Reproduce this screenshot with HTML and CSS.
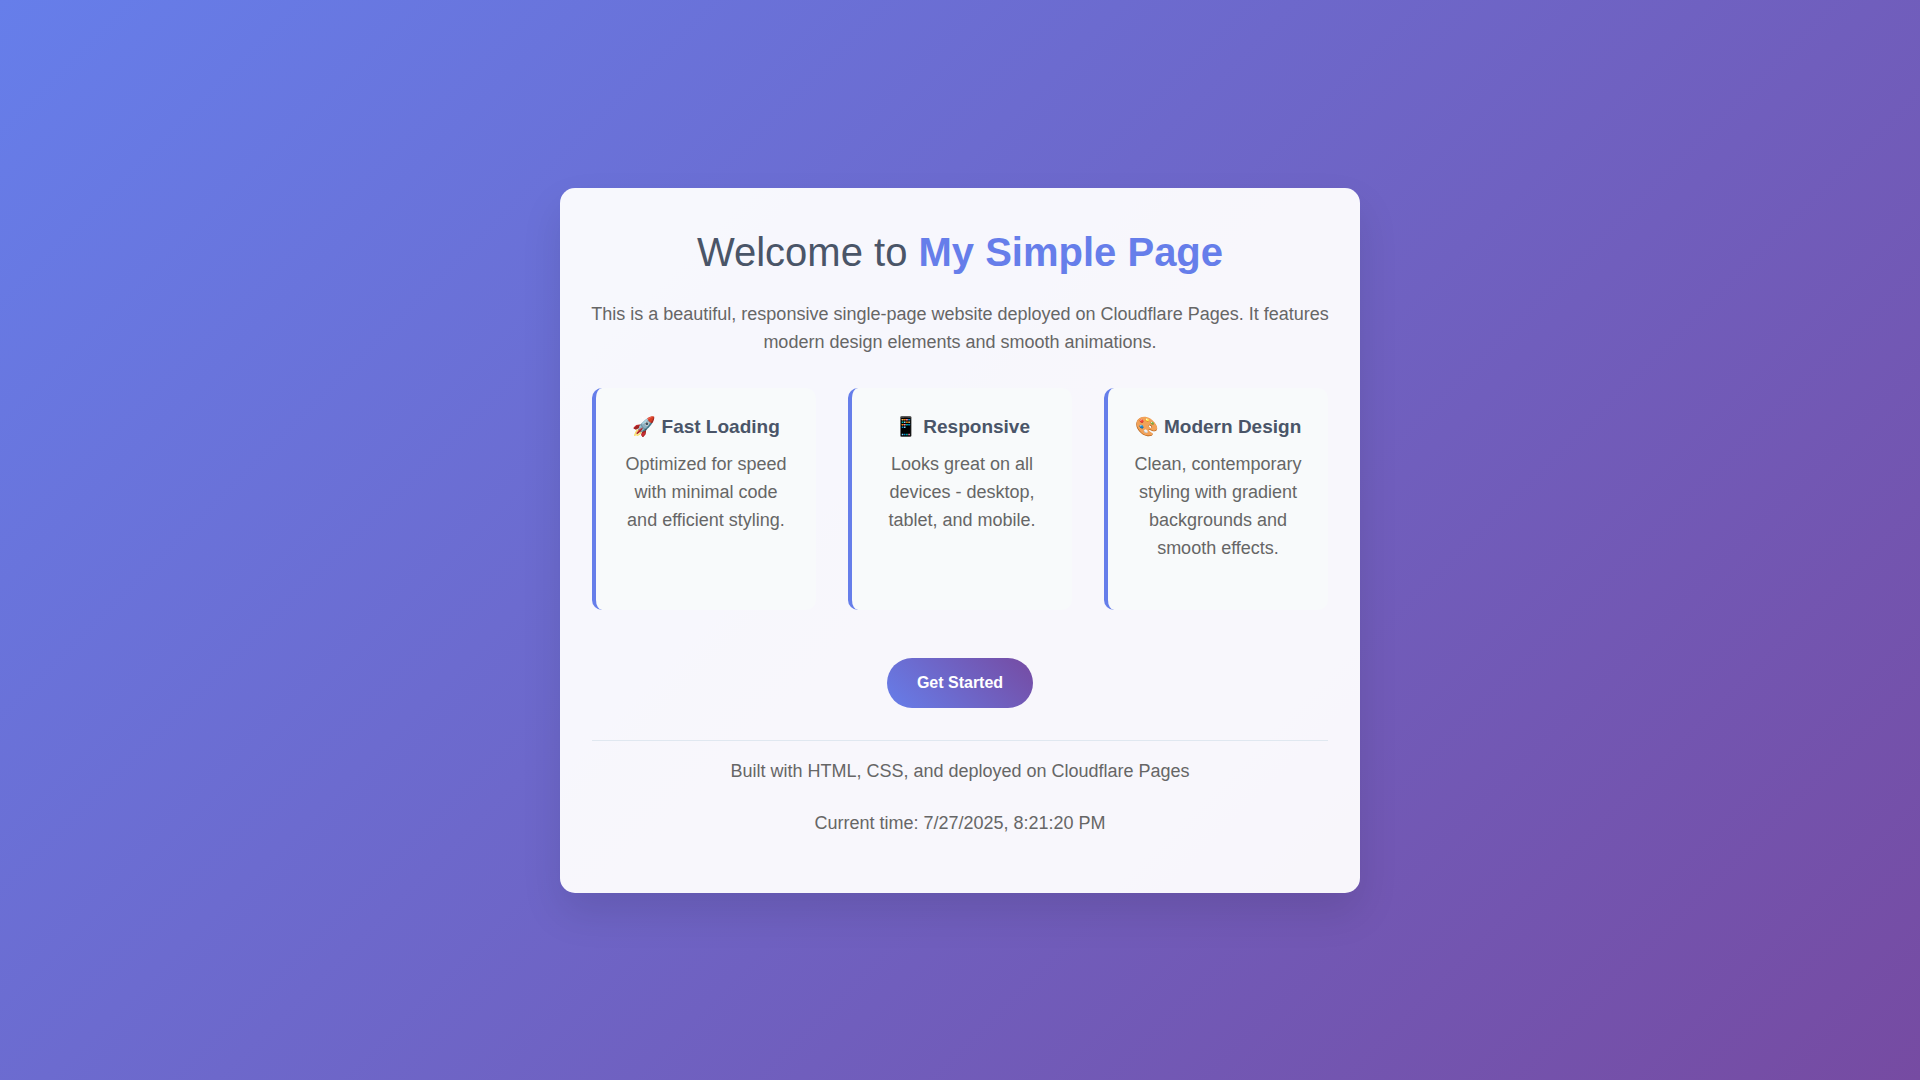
FILE: index.html
```html
<!DOCTYPE html>
<html lang="en">
<head>
    <meta charset="UTF-8">
    <meta name="viewport" content="width=device-width, initial-scale=1.0">
    <title>My Simple Page</title>
    <link rel="stylesheet" href="styles.css">
</head>
<body>
    <div class="container">
        <h1>Welcome to <span class="highlight">My Simple Page</span></h1>
        <p class="intro">This is a beautiful, responsive single-page website deployed on Cloudflare Pages. It features modern design elements and smooth animations.</p>

        <div class="features">
            <div class="feature">
                <h3>🚀 Fast Loading</h3>
                <p>Optimized for speed with minimal code and efficient styling.</p>
            </div>
            <div class="feature">
                <h3>📱 Responsive</h3>
                <p>Looks great on all devices - desktop, tablet, and mobile.</p>
            </div>
            <div class="feature">
                <h3>🎨 Modern Design</h3>
                <p>Clean, contemporary styling with gradient backgrounds and smooth effects.</p>
            </div>
        </div>

        <button class="btn" type="button">Get Started</button>

        <div class="footer">
            <p>Built with HTML, CSS, and deployed on Cloudflare Pages</p>
            <p>Current time: <span id="time">7/27/2025, 8:21:20 PM</span></p>
        </div>
    </div>
</body>
</html>
```
FILE: styles.css
```css
* {
    margin: 0;
    padding: 0;
    box-sizing: border-box;
}

body {
    font-family: "Liberation Sans", Arial, sans-serif;
    line-height: 1.6;
    color: #333;
    background: linear-gradient(135deg, #667eea 0%, #764ba2 100%);
    min-height: 100vh;
    display: flex;
    align-items: center;
    justify-content: center;
}

.container {
    background: rgba(255, 255, 255, 0.95);
    width: 90%;
    max-width: 800px;
    padding: 32px;
    border-radius: 15px;
    box-shadow: 0 20px 40px rgba(0, 0, 0, 0.1);
    text-align: center;
}

h1 {
    font-size: 40px;
    font-weight: 300;
    color: #4a5568;
    margin-bottom: 16px;
}

.highlight {
    color: #667eea;
    font-weight: bold;
}

p {
    font-size: 18px;
    line-height: 28px;
    color: #666;
    margin-bottom: 24px;
}

/* a little wider than the cards below */
.intro {
    margin: 0 -8px 24px;
}

.features {
    display: grid;
    grid-template-columns: repeat(auto-fit, minmax(200px, 1fr));
    gap: 32px;
    margin: 32px 0;
}

.feature {
    padding: 24px;
    background: #f8fafb;
    border-radius: 10px;
    border-left: 4px solid #667eea;
}

.feature h3 {
    font-size: 19px;
    line-height: 30px;
    color: #4a5568;
    margin-bottom: 8px;
}

.btn {
    font-family: inherit;
    font-size: 16px;
    font-weight: bold;
    color: white;
    background: linear-gradient(45deg, #667eea, #764ba2);
    padding: 16px 30px;
    border: none;
    border-radius: 25px;
    margin: 16px 0;
    cursor: pointer;
}

.footer {
    margin-top: 16px;
    padding-top: 16px;
    border-top: 1px solid #e0e8f0;
}
```
